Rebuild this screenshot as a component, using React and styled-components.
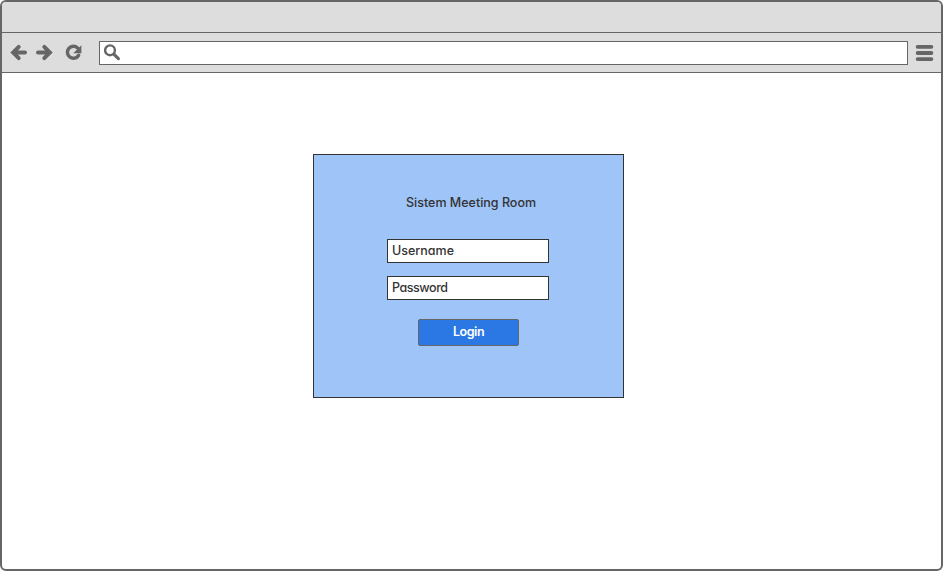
import React from "react";
import styled, { createGlobalStyle } from "styled-components";

const GlobalStyle = createGlobalStyle`
  *, *::before, *::after { box-sizing: border-box; }
  body { margin: 0; background: #fff; }
`;

const BrowserFrame = styled.div`
  display: flex;
  flex-direction: column;
  width: 943px;
  height: 571px;
  overflow: hidden;
  border: 2px solid #666;
  border-radius: 6px;
  background: #fff;
  color: #333;
  font: 500 12.5px/16px Inter, "Liberation Sans", sans-serif;
  font-feature-settings: "cv11" 1;
`;

const TitleBar = styled.div`
  flex: 0 0 31px;
  background: #ddd;
  border-bottom: 1px solid #666;
`;

const Toolbar = styled.div`
  flex: 0 0 40px;
  display: flex;
  align-items: center;
  padding: 0 7px 0 8px;
  background: #ddd;
  border-bottom: 1px solid #666;
`;

const Navigation = styled.div`
  display: flex;
  width: 89px;
  gap: 7px;
`;

const Icon = styled.svg`
  display: block;
  flex: none;
  width: ${({ $width = 18 }) => $width}px;
  height: 18px;
  margin-left: ${({ $offset = 0 }) => $offset}px;
  fill: none;
  stroke: #666;
`;

const AddressBar = styled.div`
  display: flex;
  align-items: center;
  flex: 1;
  height: 24px;
  margin-right: 7px;
  padding-left: 4px;
  background: #fff;
  border: 1px solid #666;
`;

const Page = styled.main`
  flex: 1;
  display: flex;
  align-items: flex-start;
  padding: 81px 0 0 311px;
`;

const LoginCard = styled.form`
  display: flex;
  flex-direction: column;
  align-items: center;
  width: 311px;
  height: 244px;
  padding-top: 40px;
  background: #9fc4f8;
  border: 1px solid #333;
`;

const Title = styled.h1`
  margin: 0 0 28px 5px;
  font: inherit;
  white-space: nowrap;
`;

const Field = styled.input`
  width: 162px;
  height: 24px;
  margin: 0 1px 13px 0;
  padding: 0 4px 1px;
  color: #333;
  background: #fff;
  border: 1px solid #333;
  border-radius: 0;
  outline: none;
  font: inherit;
  font-feature-settings: inherit;
  letter-spacing: ${({ $tracking = 0 }) => $tracking}px;
  &::placeholder { color: #333; opacity: 1; }
`;

const LoginButton = styled.button`
  width: 101px;
  height: 27px;
  margin-top: 6px;
  padding: 0 0 1px;
  color: #fff;
  background: #2b78e4;
  border: 1px solid #666;
  border-radius: 2px;
  font: inherit;
  font-weight: 600;
  font-feature-settings: inherit;
  letter-spacing: -0.45px;
`;

export default function App() {
  return (
    <BrowserFrame>
      <GlobalStyle />
      <TitleBar />
      <Toolbar>
        <Navigation>
          <Icon viewBox="0 0 18 18" strokeWidth="4" strokeLinecap="round">
            <path d="M8.7 2.9 3.1 8.5l5.6 5.6M4 8.5h11" />
          </Icon>
          <Icon viewBox="0 0 18 18" strokeWidth="4" strokeLinecap="round">
            <path d="m9.3 2.9 5.6 5.6-5.6 5.6M14 8.5H3" />
          </Icon>
          <Icon viewBox="0 0 18 18" $offset={5} strokeWidth="3.5">
            <path d="M12.7 4.1A6 6 0 1 0 13.6 11.3" strokeLinecap="round" />
            <path d="M16.4 1.2v8H8.2Z" fill="#666" stroke="none" />
          </Icon>
        </Navigation>
        <AddressBar>
          <Icon viewBox="0 0 18 18">
            <circle cx="6" cy="6.3" r="4.9" strokeWidth="2.4" />
            <path d="m9.8 10.1 4.6 4.5" strokeWidth="3.2" strokeLinecap="round" />
          </Icon>
        </AddressBar>
        <Icon viewBox="0 0 19 18" $width={19} strokeWidth="3.8" strokeLinecap="round">
          <path d="M2.6 2.8h13.8M2.6 9h13.8M2.6 15.1h13.8" />
        </Icon>
      </Toolbar>
      <Page>
        <LoginCard onSubmit={(event) => event.preventDefault()}>
          <Title>Sistem Meeting Room</Title>
          <Field placeholder="Username" aria-label="Username" />
          <Field type="password" placeholder="Password" aria-label="Password" $tracking={-0.45} />
          <LoginButton>Login</LoginButton>
        </LoginCard>
      </Page>
    </BrowserFrame>
  );
}
